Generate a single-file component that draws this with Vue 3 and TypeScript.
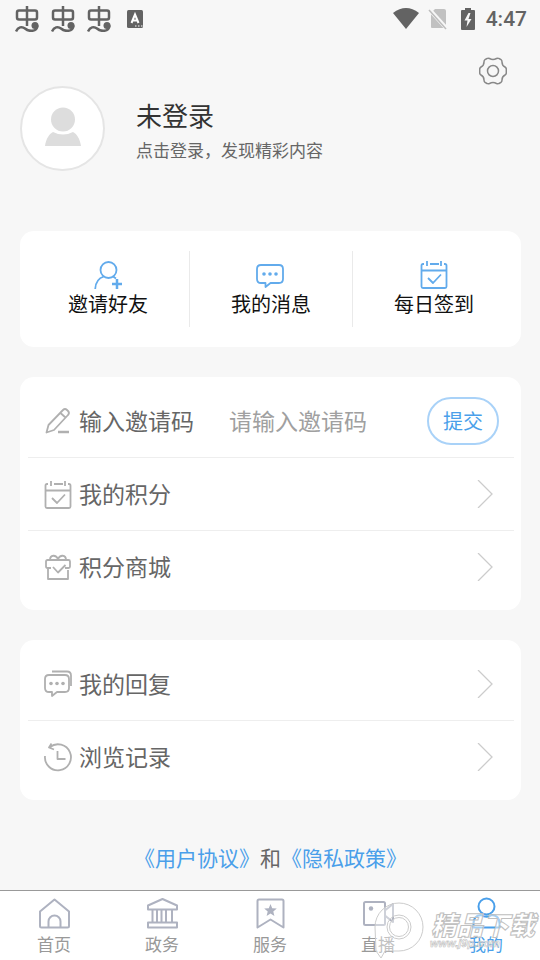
<script setup lang="ts">
import { ref } from 'vue'

interface Item { icon: string; label: string }

const code = ref('')
const active = ref('我的')
const shortcuts: Item[] = [
  { icon: 'invite', label: '邀请好友' },
  { icon: 'message', label: '我的消息' },
  { icon: 'calendar', label: '每日签到' },
]
const pointRows: Item[] = [
  { icon: 'calendar', label: '我的积分' },
  { icon: 'gift', label: '积分商城' },
]
const historyRows: Item[] = [
  { icon: 'reply', label: '我的回复' },
  { icon: 'history', label: '浏览记录' },
]
const tabs: Item[] = [
  { icon: 'home', label: '首页' },
  { icon: 'bank', label: '政务' },
  { icon: 'bookmark', label: '服务' },
  { icon: 'video', label: '直播' },
  { icon: 'user', label: '我的' },
]
const paths: Record<string, string> = {
  invite: 'M14.500 2a8 8 0 1 1 0 16a8 8 0 1 1 0-16M10 16.500C5 18 1.500 22 1.200 29M19 16.500l3 2',
  message: 'M4 5h18q4 0 4 4v10q0 4-4 4H13.500l-5 4v-4H4q-4 0-4-4V9q0-4 4-4z',
  calendar: 'M4 4H3q-1.500 0-1.500 1.500V26.500q0 1.500 1.500 1.500h22q1.500 0 1.500-1.500V5.500Q26.500 4 25 4h-1M10 4h9M1.500 10.500h25M7 1v5M21 1v5M8 18l5 5 8-8.500',
  gift: 'M7 15H3.500Q2 15 2 13.500V8.500Q2 7 3.500 7h21Q26 7 26 8.500v5q0 1.500-1.500 1.500H21M4 15v11h20V17M6 7c0-5.500 6-5.500 8-1 2-4.500 8-4.500 8 1M9 14l5 5.500 7.500-7.500',
  reply: 'M5 5h16q4 0 4 4v9q0 4-4 4h-8l-5 4v-4H5q-4 0-4-4V9q0-4 4-4zM8 1.500h15q4 0 4 4V16',
  history: 'M1 13a13 13 0 1 0 5-9M7.500 0.500L5 4.500l5 2M13.500 8v8h8',
  home: 'M16.500 2.500L31 14.500V29q0 1.500-1.500 1.500h-26Q2 30.500 2 29V14.500zM10.500 30V24.500a6 6 0 0 1 12 0v5.500',
  bank: 'M16.500 2L31 8.500V12.500H2V8.500zM2 25.500h29v5H2zM6.500 13v12M11 13v12M15.500 13v12M20 13v12M26 13v12',
  bookmark: 'M5 2.500h23q1.500 0 1.500 1.500v26.500L16.500 22.500 3.500 30.500V4q0-1.500 1.500-1.500z',
  video: 'M3.500 5h18q1.500 0 1.500 1.500v20q0 1.500-1.500 1.500h-18Q2 28 2 26.500v-20Q2 5 3.500 5zM23.500 13l7.500-6v18l-7.500-6',
  user: 'M16.500 1.500a8 8 0 1 1 0 16a8 8 0 1 1 0-16M3.500 30.500v-4q0-8 7.500-8.500 5.500 3.500 11 0 7.500.5 7.500 8.500v4z',
}
</script>

<template>
  <div class="page">
    <header class="status">
      <div class="status-left">
        <svg v-for="n in 3" :key="n" class="bug" viewBox="0 0 24 26" aria-hidden="true">
          <path d="M12 0v20M4 4.500h16q2 0 2 2v5q0 2-2 2H4q-2 0-2-2v-5q0-2 2-2zM1 25.500c2-4.500 6-5.500 9-3 4 3.500 12 3.500 12.500-3" />
          <circle class="head" cx="20" cy="19.500" r="3.500" />
        </svg>
        <svg class="lang" viewBox="0 0 16 18" aria-hidden="true">
          <rect width="16" height="18" rx="1.500" fill="#636363" />
          <path d="M4.500 13L8 4.500l3.500 8.500M5.800 10.500h4.400" fill="none" stroke="#fff" stroke-width="2" />
          <path d="M8 16h1.500M11 16h1.500M14 16h1.500" stroke="#fff" />
        </svg>
      </div>
      <div class="status-right">
        <svg class="wifi" viewBox="0 0 26 22" aria-hidden="true"><path d="M0 5Q13-5 26 5L13 21z" fill="#636363" /></svg>
        <svg class="sim" viewBox="0 0 20 22" aria-hidden="true">
          <path d="M7 1h9q2 0 2 2v16q0 1-1 1H4q-1 0-1-1V5z" fill="#c1c1c1" />
          <path d="M1 1l18 20" stroke="#f7f7f7" stroke-width="4" />
          <path d="M1 2l17 19" stroke="#bdbdbd" stroke-width="1.500" />
        </svg>
        <svg class="battery" viewBox="0 0 14 22" aria-hidden="true">
          <path d="M4 0h6v2h3q1 0 1 1v18q0 1-1 1H1q-1 0-1-1V3q0-1 1-1h3z" fill="#636363" />
          <path d="M7.500 5L3.500 12.500h3L5.500 19l5-8H7.500l2-6z" fill="#f7f7f7" />
        </svg>
        <time>4:47</time>
      </div>
    </header>

    <main>
      <div class="tools">
        <button class="gear" type="button" aria-label="设置">
          <svg viewBox="0 0 28 28" aria-hidden="true">
            <path d="M10.500 1.500Q14 3.500 17.500 1.500Q19 0.800 20 1.500L22 2.700Q23 3.300 23 5Q23 8.500 26 10Q27.300 10.800 27.300 12V16Q27.300 17.200 26 18Q23 19.500 23 23Q23 24.700 22 25.300L20 26.500Q19 27.200 17.500 26.500Q14 24.500 10.500 26.500Q9 27.200 8 26.500L6 25.300Q5 24.700 5 23Q5 19.500 2 18Q0.700 17.200 0.700 16V12Q0.700 10.800 2 10Q5 8.500 5 5Q5 3.300 6 2.700L8 1.500Q9 0.800 10.500 1.500z" />
            <circle cx="14" cy="14" r="5.500" />
          </svg>
        </button>
      </div>

      <a class="profile" href="#login">
        <span class="avatar">
          <svg viewBox="0 0 36 44" aria-hidden="true">
            <circle cx="18" cy="12.500" r="12" />
            <path d="M0 39c1-7 4-12 8-14q10 5 20 0c4 2 7 7 8 14z" />
          </svg>
        </span>
        <span class="who">
          <strong>未登录</strong>
          <small>点击登录，发现精彩内容</small>
        </span>
      </a>

      <nav class="card shortcuts">
        <a v-for="s in shortcuts" :key="s.label" href="#shortcut">
          <svg class="icon" viewBox="0 0 28 30" aria-hidden="true">
            <path :d="paths[s.icon]" />
            <path v-if="s.icon === 'invite'" class="bold" d="M18 24h10M23 19v10" />
            <g v-if="s.icon === 'message'" class="dots"><circle cx="7" cy="14" r="1.800" /><circle cx="13" cy="14" r="1.800" /><circle cx="19" cy="14" r="1.800" /></g>
          </svg>
          <span>{{ s.label }}</span>
        </a>
      </nav>

      <section class="card list">
        <form class="row" @submit.prevent>
          <svg class="icon" viewBox="0 0 28 28" aria-hidden="true">
            <path d="M2.500 25.500L4.500 18 19 3q2-2 4 0l1 1q2 2 0 4L10 23zM16.500 6l5.500 5" /><path class="bold" d="M14 25h11" />
          </svg>
          <label class="text" for="code">输入邀请码</label>
          <input id="code" v-model="code" class="text" type="text" placeholder="请输入邀请码">
          <button class="submit" type="submit">提交</button>
        </form>
        <a v-for="r in pointRows" :key="r.label" class="row" href="#points">
          <svg class="icon" viewBox="0 0 28 28" aria-hidden="true"><path :d="paths[r.icon]" /></svg>
          <span class="text">{{ r.label }}</span>
          <svg class="chevron" viewBox="0 0 16 28" aria-hidden="true"><path d="M1 0l14 14L1 28" /></svg>
        </a>
      </section>

      <section class="card list">
        <a v-for="r in historyRows" :key="r.label" class="row" href="#history">
          <svg class="icon" viewBox="0 0 28 28" aria-hidden="true">
            <path :d="paths[r.icon]" />
            <g v-if="r.icon === 'reply'" class="dots"><circle cx="7" cy="13.500" r="1.800" /><circle cx="13" cy="13.500" r="1.800" /><circle cx="19" cy="13.500" r="1.800" /></g>
          </svg>
          <span class="text">{{ r.label }}</span>
          <svg class="chevron" viewBox="0 0 16 28" aria-hidden="true"><path d="M1 0l14 14L1 28" /></svg>
        </a>
      </section>

      <p class="legal"><a href="#terms">《用户协议》</a>和<a href="#privacy">《隐私政策》</a></p>
    </main>

    <footer class="tabbar">
      <nav>
        <a v-for="t in tabs" :key="t.label" href="#tab" :class="{ active: t.label === active }" @click.prevent="active = t.label">
          <svg viewBox="0 0 32 32" aria-hidden="true">
            <path :d="paths[t.icon]" />
            <path v-if="t.icon === 'bookmark'" class="fill" d="M16.500 7l1.700 4.300 4.600.3-3.500 3 1.100 4.500-3.900-2.500-3.900 2.500 1.100-4.500-3.500-3 4.600-.3z" />
            <circle v-if="t.icon === 'video'" class="fill" cx="9" cy="11.500" r="2.200" />
          </svg>
          <span>{{ t.label }}</span>
        </a>
      </nav>
      <svg class="watermark" viewBox="0 0 170 58" aria-hidden="true">
        <path class="disc" fill-rule="evenodd" d="M5 25a24 24 0 1 1 24 24H15L11 56 6 49zM29 13a12 12 0 1 0 0 24a12 12 0 1 0 0-24z" />
        <circle class="disc" cx="29" cy="25" r="9.500" />
        <text class="brand" x="61" y="33">精品下载</text>
        <text class="site" x="60" y="45">www.j9p.com</text>
      </svg>
    </footer>
  </div>
</template>

<style>
body { background: #f7f7f7; }
</style>

<style scoped>
.page { min-height: 100vh; display: flex; flex-direction: column; background: #f7f7f7; color: #666; font-family: "Noto Sans CJK SC", sans-serif; }
.page *, .page { box-sizing: border-box; }
a { color: inherit; text-decoration: none; }
button { font: inherit; cursor: pointer; }
svg { display: block; flex: none; }

.status { display: flex; justify-content: space-between; align-items: center; height: 37px; padding: 0 13px 0 15px; }
.status-left, .status-right { display: flex; align-items: center; }
.status-left { gap: 12px; }
.bug { width: 24px; height: 26px; fill: none; stroke: #636363; stroke-width: 2.500; }
.bug .head { fill: #636363; stroke: none; }
.lang { width: 16px; height: 18px; margin-left: 4px; }
.wifi { width: 26px; height: 22px; margin-right: 9px; }
.sim { width: 20px; height: 22px; margin-right: 13px; }
.battery { width: 14px; height: 22px; margin-right: 11px; }
time { font: 500 21px/24px Roboto, sans-serif; color: #636363; }

main { flex: 1; padding: 0 19px 0 20px; }
.tools { display: flex; justify-content: flex-end; padding: 19px 14px 0 0; }
.gear { width: 28px; height: 30px; padding: 0; border: 0; background: none; }
.gear svg { width: 28px; height: 28px; fill: none; stroke: #888; stroke-width: 1.500; stroke-linejoin: round; }

.profile { display: flex; align-items: center; gap: 31px; margin-bottom: 60px; }
.avatar { display: grid; place-items: center; width: 85px; height: 85px; border: 2px solid #e5e5e5; border-radius: 50%; background: #fff; }
.avatar svg { width: 36px; height: 44px; fill: #ddd; }
.who { display: flex; flex-direction: column; gap: 2px; padding-top: 2px; }
.who strong { font-size: 26px; line-height: 38px; font-weight: 400; color: #333; }
.who small { font-size: 17px; line-height: 28px; }

.card { margin-bottom: 30px; border-radius: 14px; background: #fff; }
.shortcuts { display: flex; padding: 20px 6px 20px 7px; }
.shortcuts a { flex: 1; display: flex; flex-direction: column; align-items: center; height: 76px; padding-top: 9px; color: #111; font-size: 20px; line-height: 28px; }
.shortcuts a + a { border-left: 1px solid #eaeaea; }
.icon { overflow: visible; fill: none; stroke: #b0b0b0; stroke-width: 1.800; stroke-linejoin: round; }
.shortcuts .icon { width: 28px; height: 30px; stroke: #62abec; }
.icon .bold { stroke-width: 2.500; }
.dots { fill: #b0b0b0; stroke: none; }
.shortcuts .dots { fill: #62abec; }

.list { padding: 8px 7px 7px 8px; }
.row { display: flex; align-items: center; height: 73px; padding: 0 21px 0 16px; font-size: 23px; line-height: 34px; border-bottom: 1px solid #eee; }
form.row { padding-right: 15px; }
.row:last-child { height: 72px; border-bottom: 0; }
.row .icon { width: 28px; height: 28px; margin-right: 7px; }
.row .text { padding: 0 0 2px; }
.chevron { width: 16px; height: 28px; margin-left: auto; fill: none; stroke: #ccc; stroke-width: 1.300; }
input { flex: 1; min-width: 0; height: 48px; margin: 0 12px 0 35px; border: 0; outline: 0; background: none; font: inherit; color: #666; }
input::placeholder { color: #a0a0a0; opacity: 1; }
.submit { flex: none; width: 72px; height: 48px; padding: 0; border: 2px solid #a9d2f8; border-radius: 24px; background: #fff; color: #4a9fea; font-size: 20px; line-height: 28px; }

.legal { margin: 0; padding-bottom: 6px; text-align: center; font-size: 21px; line-height: 54px; }
.legal a { color: #4a9fea; }

.tabbar { position: relative; border-top: 1px solid #999; background: #fff; }
.tabbar nav { display: flex; }
.tabbar nav a { flex: 1; display: flex; flex-direction: column; align-items: center; gap: 1px; height: 69px; padding-top: 6px; color: #999; font-size: 17px; line-height: 28px; }
.tabbar nav svg { width: 32px; height: 32px; fill: none; stroke: #aeb2c0; stroke-width: 2; stroke-linejoin: round; }
.tabbar nav svg .fill { fill: #aeb2c0; stroke: none; }
.tabbar nav a.active { color: #4a9fea; }
.tabbar nav a.active svg { stroke: #4a9fea; }
.watermark { position: absolute; right: 0; bottom: 0; width: 170px; height: 58px; pointer-events: none; }
.disc { fill: #fff; fill-opacity: 0.400; stroke: #ccc; }
.brand { font: italic 900 26px "Noto Sans CJK SC", sans-serif; fill: #fff; fill-opacity: 0.500; stroke: #c0c0c0; stroke-width: 1; }
.site { font: italic 700 11px "Liberation Sans", sans-serif; fill: #fff; fill-opacity: 0.500; stroke: #c0c0c0; stroke-width: 0.600; }
</style>
